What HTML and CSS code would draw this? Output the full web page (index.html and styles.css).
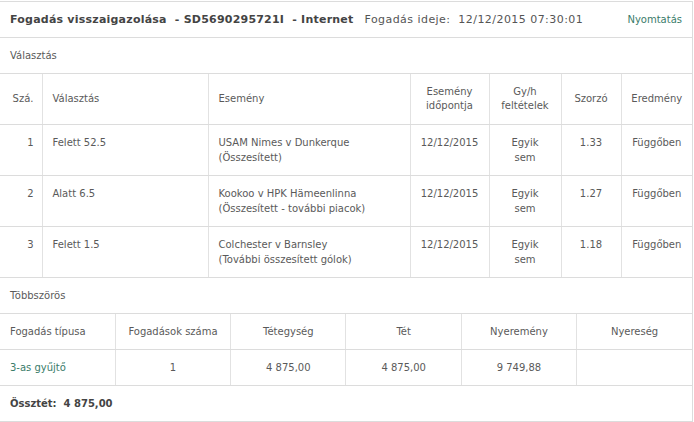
FILE: index.html
```html
<!DOCTYPE html>
<html lang="hu">
<head>
<meta charset="utf-8">
<title>Fogadás visszaigazolása</title>
<link rel="stylesheet" href="styles.css">
</head>
<body>
<div class="panel">
  <div class="head">
    <div class="head-left">
      <span class="title">Fogadás visszaigazolása&nbsp; - SD5690295721I&nbsp; - Internet</span>
      <span class="time">Fogadás ideje:&nbsp; 12/12/2015 07:30:01</span>
    </div>
    <a class="print" href="#">Nyomtatás</a>
  </div>
  <div class="section">Választás</div>
  <table class="sel">
    <colgroup>
      <col class="c1"><col class="c2"><col class="c3"><col class="c4"><col class="c5"><col class="c6"><col class="c7">
    </colgroup>
    <thead>
      <tr>
        <th class="num">Szá.</th>
        <th class="left">Választás</th>
        <th class="left">Esemény</th>
        <th>Esemény<br>időpontja</th>
        <th>Gy/h<br>feltételek</th>
        <th>Szorzó</th>
        <th>Eredmény</th>
      </tr>
    </thead>
    <tbody>
      <tr>
        <td class="num">1</td>
        <td class="left">Felett 52.5</td>
        <td class="left">USAM Nimes v Dunkerque<br>(Összesített)</td>
        <td>12/12/2015</td>
        <td>Egyik<br>sem</td>
        <td>1.33</td>
        <td>Függőben</td>
      </tr>
      <tr>
        <td class="num">2</td>
        <td class="left">Alatt 6.5</td>
        <td class="left">Kookoo v HPK Hämeenlinna<br>(Összesített - további piacok)</td>
        <td>12/12/2015</td>
        <td>Egyik<br>sem</td>
        <td>1.27</td>
        <td>Függőben</td>
      </tr>
      <tr>
        <td class="num">3</td>
        <td class="left">Felett 1.5</td>
        <td class="left">Colchester v Barnsley<br>(További összesített gólok)</td>
        <td>12/12/2015</td>
        <td>Egyik<br>sem</td>
        <td>1.18</td>
        <td>Függőben</td>
      </tr>
    </tbody>
  </table>
  <div class="section">Többszörös</div>
  <table class="multi">
    <thead>
      <tr>
        <th class="left">Fogadás típusa</th>
        <th>Fogadások száma</th>
        <th>Tétegység</th>
        <th>Tét</th>
        <th>Nyeremény</th>
        <th>Nyereség</th>
      </tr>
    </thead>
    <tbody>
      <tr>
        <td class="left"><a class="link" href="#">3-as gyűjtő</a></td>
        <td>1</td>
        <td>4 875,00</td>
        <td>4 875,00</td>
        <td>9 749,88</td>
        <td></td>
      </tr>
    </tbody>
  </table>
  <div class="total">Össztét:&nbsp; 4 875,00</div>
</div>
</body>
</html>
```

FILE: styles.css
```css
html, body {
  margin: 0;
  padding: 0;
  background: #fff;
}

body {
  font-family: "DejaVu Sans", Verdana, sans-serif;
  font-size: 10px;
  color: #5a5a5a;
}

.panel {
  width: 692px;
  margin-top: 1px;
  border-top: 1px solid #dcdcdc;
  border-right: 1px solid #dcdcdc;
  background: #fff;
}

.head {
  height: 35px;
  display: flex;
  align-items: center;
  justify-content: space-between;
  padding: 0 10px;
  border-bottom: 1px solid #dcdcdc;
}

.head-left {
  display: flex;
  align-items: center;
  gap: 11px;
}

.title {
  font-size: 11px;
  font-weight: bold;
  letter-spacing: 0.22px;
  color: #444;
}

.time {
  font-size: 11px;
  letter-spacing: 0.45px;
  color: #555;
}

.print {
  color: #3a7c6a;
  text-decoration: none;
  font-size: 10px;
}

.section {
  height: 35px;
  line-height: 35px;
  padding: 0 10px;
  border-bottom: 1px solid #dcdcdc;
}

table {
  width: 100%;
  border-collapse: collapse;
  table-layout: fixed;
}

th, td {
  border-right: 1px solid #e2e2e2;
  border-bottom: 1px solid #dcdcdc;
  text-align: center;
  font-weight: normal;
  padding: 0 8px;
}

th:last-child, td:last-child {
  border-right: 0;
}

.sel .c1 { width: 42px; }
.sel .c2 { width: 166px; }
.sel .c3 { width: 202px; }
.sel .c4 { width: 79px; }
.sel .c5 { width: 72px; }
.sel .c6 { width: 60px; }
.sel .c7 { width: 71px; }

.sel th {
  height: 50px;
  line-height: 14px;
  vertical-align: middle;
}

.sel td {
  height: 40px;
  line-height: 15px;
  vertical-align: top;
  padding-top: 10px;
  padding-bottom: 0;
}

.sel .num {
  text-align: right;
  padding-right: 8px;
}

.sel .left {
  text-align: left;
  padding-left: 10px;
}

.multi th, .multi td {
  height: 35px;
  vertical-align: middle;
}

.multi .left {
  text-align: left;
  padding-left: 10px;
}

.link {
  color: #3a7c6a;
  text-decoration: none;
}

.total {
  height: 35px;
  line-height: 35px;
  padding: 0 10px;
  font-size: 10px;
  font-weight: bold;
  color: #444;
  border-bottom: 1px solid #dcdcdc;
}
```
